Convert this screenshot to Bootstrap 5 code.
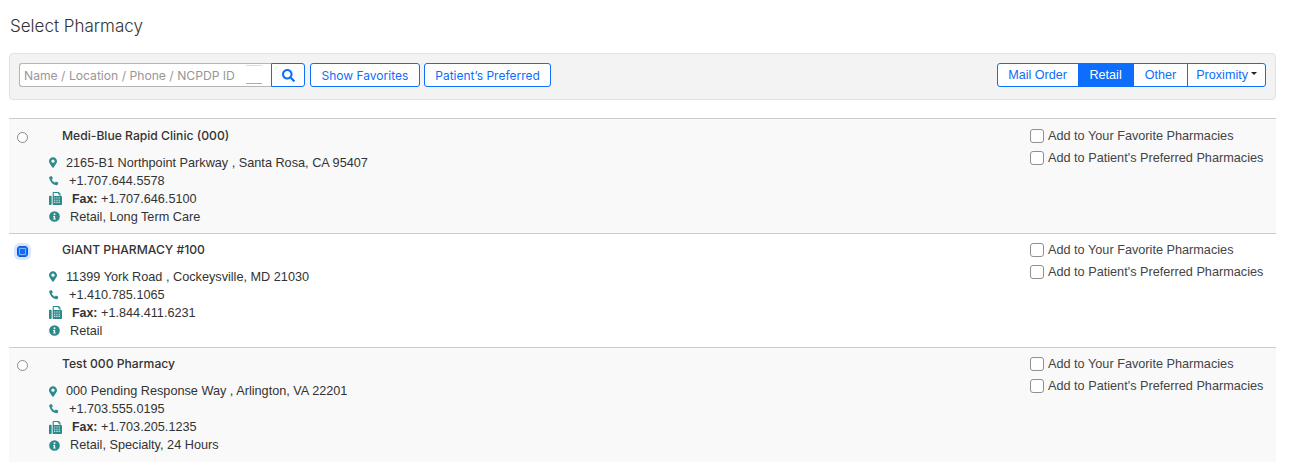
<!DOCTYPE html>
<html lang="en">
  <head>
    <meta charset="UTF-8" />
    <meta name="viewport" content="width=device-width, initial-scale=1.0" />
    <title>Select Pharmacy</title>
    <link
      rel="stylesheet"
      href="https://cdn.jsdelivr.net/npm/bootstrap@5.3.0/dist/css/bootstrap.min.css"
    />
    <style>
      body {
        font-family: "Liberation Sans", Arial, sans-serif;
        font-size: 12.7px;
        color: #333;
        overflow: hidden;
      }
      .page-wrap {
        width: 1267px;
        margin-left: 9px;
        padding-top: 16px;
      }
      .page-title {
        font-family: Inter, sans-serif;
        font-size: 17px;
        font-weight: 300;
        line-height: 20px;
        margin: 0 0 17px 1px;
        color: #333;
      }
      .search-panel {
        height: 47px;
        background: #f3f3f3;
        border: 1px solid #e2e2e2;
        border-radius: 4px;
        padding: 9px 9px 0;
        margin-bottom: 18.4px;
      }
      .search-group {
        width: 286px;
        height: 24px;
        margin-right: 1px;
      }
      .search-input {
        width: 252px;
        height: 24px;
        font-family: Inter, sans-serif;
        font-size: 12.15px;
        padding: 0 4px;
        border: 1px solid #b5b5b5;
        border-right: 0;
        border-radius: 3px 0 0 3px;
        background-color: #fff;
        background-image: linear-gradient(#f6cfc9, #f6cfc9), linear-gradient(#e8958a, #e8958a);
        background-repeat: no-repeat;
        background-size: 16px 1px;
        background-position: 226px 1px, 226px 19px;
        color: #333;
      }
      .search-input::placeholder {
        color: #979797;
      }
      .blue-btn {
        height: 24px;
        padding: 0 10.5px;
        font-size: 12px;
        line-height: 21px;
        font-family: Inter, sans-serif;
        --bs-btn-color: #0d6efd;
        --bs-btn-border-color: #0d6efd;
        background: #fff;
        border-radius: 3px;
      }
      .search-btn {
        width: 34px;
        padding: 0;
        border-radius: 0 3px 3px 0;
      }
      .seg-group .btn {
        height: 24px;
        padding: 0 11px;
        font-size: 12.6px;
        line-height: 21px;
        border-radius: 3px;
        font-family: "Liberation Sans", Arial, sans-serif;
      }
      .seg-group .btn:first-child {
        padding: 0 10.5px;
      }
      .seg-group .btn.dropdown-toggle {
        padding: 0 8px;
      }
      .seg-group .btn.dropdown-toggle::after {
        margin-left: 3px;
        color: #222;
      }
      .seg-group .btn.active {
        background: #0d6efd;
        color: #fff;
      }
      .ph-row {
        height: 114.4px;
        border-top: 1px solid #ccc;
        padding: 7.2px 12px 0 8px;
      }
      .ph-row.shaded {
        background: #f9f9f9;
      }
      .ph-pick {
        width: 32px;
        flex: none;
        padding-top: 5px;
      }
      .ph-radio {
        display: block;
        width: 11px;
        height: 11px;
        margin: 0;
        border: 1px solid #8a8a8a;
        border-radius: 50%;
        background: #fff;
        appearance: none;
      }
      .ph-radio:checked {
        background: #0d6efd;
        border: 1px solid #0a58ca;
        border-radius: 3px;
        box-shadow: 0 0 0 3px #d7e6fd, inset 0 0 0 1px #0d6efd, inset 0 0 0 2px #7fb0fb;
      }
      .ph-name {
        font-family: Inter, sans-serif;
        font-size: 12.15px;
        font-weight: 500;
        line-height: 18px;
        margin: 0 0 9px 13px;
        color: #333;
      }
      .ph-line {
        height: 18px;
        line-height: 18px;
        white-space: nowrap;
      }
      .ph-line strong {
        font-size: 12.4px;
      }
      .ph-ico {
        flex: none;
        display: block;
        fill: #2b8a8a;
      }
      .ph-checks {
        width: 234px;
        flex: none;
        margin-top: -2px;
      }
      .ph-check {
        height: 22px;
        line-height: 22px;
        white-space: nowrap;
        color: #444;
      }
      .ph-check input {
        appearance: none;
        width: 14px;
        height: 14px;
        border: 1px solid #8f8f8f;
        border-radius: 3px;
        background: #fff;
        margin: 0 4px 0 0;
        flex: none;
      }
      .gap-a { margin-right: 9px; }
      .gap-b { margin-right: 10px; }
      .gap-c { margin-right: 10px; }
      .gap-d { margin-right: 10px; }
    </style>
  </head>
  <body>
    <div class="page-wrap">
      <h5 class="page-title">Select Pharmacy</h5>

      <div class="search-panel d-flex justify-content-between align-items-start">
        <div class="d-flex gap-1">
          <div class="d-flex search-group">
            <input class="search-input" type="text" placeholder="Name / Location / Phone / NCPDP ID" />
            <button type="button" class="btn blue-btn search-btn d-flex align-items-center justify-content-center" aria-label="Search">
              <svg width="13" height="13" viewBox="0 0 512 512" fill="#0d6efd"><path d="M505 442.700L405.300 343c-4.500-4.500-10.600-7-17-7H372c27.600-35.300 44-79.700 44-128C416 93.100 322.900 0 208 0S0 93.100 0 208s93.100 208 208 208c48.300 0 92.700-16.400 128-44v16.300c0 6.400 2.500 12.500 7 17l99.700 99.700c9.400 9.400 24.600 9.400 33.900 0l28.300-28.300c9.400-9.400 9.400-24.600.1-34zM208 336c-70.700 0-128-57.200-128-128 0-70.700 57.200-128 128-128 70.700 0 128 57.200 128 128 0 70.700-57.200 128-128 128z"/></svg>
            </button>
          </div>
          <button type="button" class="btn blue-btn">Show Favorites</button>
          <button type="button" class="btn blue-btn">Patient’s Preferred</button>
        </div>
        <div class="btn-group seg-group" role="group">
          <button type="button" class="btn btn-outline-primary bg-white">Mail Order</button>
          <button type="button" class="btn btn-outline-primary active">Retail</button>
          <button type="button" class="btn btn-outline-primary bg-white">Other</button>
          <button type="button" class="btn btn-outline-primary bg-white dropdown-toggle">Proximity</button>
        </div>
      </div>

      <div id="pharmacyList"></div>
    </div>

    <script>
      const icons = {
        pin: '<svg class="ph-ico gap-a" width="8" height="11" viewBox="0 0 384 512"><path d="M172 502C27 291 0 256 0 192 0 86 86 0 192 0s192 86 192 192c0 64-27 99-172 310-10 14-30 14-40 0zm20-230a80 80 0 1 0 0-160 80 80 0 0 0 0 160z"/></svg>',
        phone: '<svg class="ph-ico gap-b" width="10" height="10" viewBox="0 0 512 512"><path d="M30 40 110 8c14-5 29 0 36 13l46 86c6 12 4 26-6 35l-50 42c30 68 94 132 162 162l42-50c9-10 23-12 35-6l86 46c13 7 18 22 13 36l-32 80c-6 14-20 24-36 22C206 460 52 306 8 76c-2-16 8-30 22-36z"/></svg>',
        fax: '<svg class="ph-ico gap-c" width="13" height="13" viewBox="0 0 512 512"><path d="M72 150H32c-18 0-32 14-32 32v298c0 18 14 32 32 32h40c18 0 32-14 32-32V182c0-18-14-32-32-32zm408 10h-26V70L384 0H176c-18 0-32 14-32 32v448c0 18 14 32 32 32h304c18 0 32-14 32-32V192c0-18-14-32-32-32zM188 44h172v56h56v60H188V44zm60 388h-44v-44h44v44zm0-86h-44v-44h44v44zm0-86h-44v-44h44v44zm88 172h-44v-44h44v44zm0-86h-44v-44h44v44zm0-86h-44v-44h44v44zm88 172h-44v-44h44v44zm0-86h-44v-44h44v44zm0-86h-44v-44h44v44z"/></svg>',
        info: '<svg class="ph-ico gap-d" width="11" height="11" viewBox="0 0 512 512"><path d="M256 8a248 248 0 1 0 0 496 248 248 0 0 0 0-496zm0 100a46 46 0 1 1 0 92 46 46 0 0 1 0-92zm60 272c0 7-5 12-12 12h-96c-7 0-12-5-12-12v-24c0-7 5-12 12-12h12v-64h-12c-7 0-12-5-12-12v-24c0-7 5-12 12-12h64c7 0 12 5 12 12v100h20c7 0 12 5 12 12v24z"/></svg>',
      };

      const pharmacies = [
        { name: "Medi-Blue Rapid Clinic (000)", address: "2165-B1 Northpoint Parkway , Santa Rosa, CA 95407", phone: "+1.707.644.5578", fax: "+1.707.646.5100", type: "Retail, Long Term Care" },
        { name: "GIANT PHARMACY #100", address: "11399 York Road , Cockeysville, MD 21030", phone: "+1.410.785.1065", fax: "+1.844.411.6231", type: "Retail", selected: true },
        { name: "Test 000 Pharmacy", address: "000 Pending Response Way , Arlington, VA 22201", phone: "+1.703.555.0195", fax: "+1.703.205.1235", type: "Retail, Specialty, 24 Hours" },
      ];

      document.getElementById("pharmacyList").innerHTML = pharmacies
        .map((p, i) => `
          <div class="ph-row d-flex ${i % 2 === 0 ? "shaded" : ""}">
            <div class="ph-pick"><input class="ph-radio" type="radio" name="pharmacy" ${p.selected ? "checked" : ""} /></div>
            <div class="flex-grow-1">
              <p class="ph-name">${p.name}</p>
              <div class="ph-line d-flex align-items-center">${icons.pin}<span>${p.address}</span></div>
              <div class="ph-line d-flex align-items-center">${icons.phone}<span>${p.phone}</span></div>
              <div class="ph-line d-flex align-items-center">${icons.fax}<span><strong>Fax:</strong> ${p.fax}</span></div>
              <div class="ph-line d-flex align-items-center">${icons.info}<span>${p.type}</span></div>
            </div>
            <div class="ph-checks">
              <label class="ph-check d-flex align-items-center"><input type="checkbox" />Add to Your Favorite Pharmacies</label>
              <label class="ph-check d-flex align-items-center"><input type="checkbox" />Add to Patient's Preferred Pharmacies</label>
            </div>
          </div>`)
        .join("");
    </script>
    <script src="https://cdn.jsdelivr.net/npm/bootstrap@5.3.0/dist/js/bootstrap.bundle.min.js"></script>
  </body>
</html>
